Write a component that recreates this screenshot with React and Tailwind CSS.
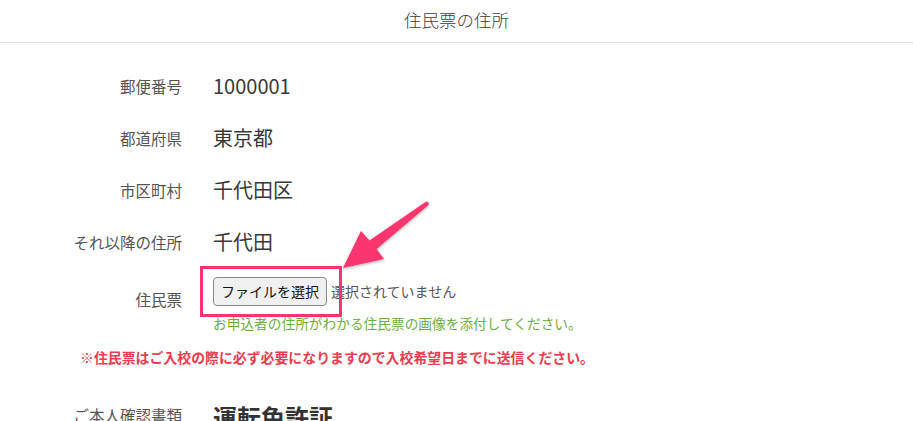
import React from "react";

const font = { fontFamily: '"Noto Sans CJK JP", "Noto Sans", sans-serif' };

function Row({ label, children }) {
  return (
    <div className="grid h-[52px] grid-cols-[182px_1fr] items-center gap-x-[31px]">
      <div className="text-right text-[15.5px] leading-6 text-[#555]">{label}</div>
      <div className="text-[20px] leading-7 text-[#383838]">{children}</div>
    </div>
  );
}

export default function App() {
  return (
    <div className="relative h-[421px] w-[913px] overflow-hidden bg-white" style={font}>
      <div className="flex h-[43px] items-center justify-center border-b border-[#e6e6e6] pb-[2px]">
        <span className="text-[17.5px] font-light text-[#3c3c3c]">住民票の住所</span>
      </div>

      <div className="pt-[17px]">
        <Row label="郵便番号">1000001</Row>
        <Row label="都道府県">東京都</Row>
        <Row label="市区町村">千代田区</Row>
        <Row label="それ以降の住所">千代田</Row>

        <div className="grid grid-cols-[182px_1fr] gap-x-[31px]">
          <div className="pt-[19px] text-right text-[15.5px] leading-6 text-[#555]">住民票</div>
          <div className="pt-[9px]">
            <div className="relative flex items-center gap-[4px]">
              <button className="flex h-[29px] w-[114px] items-center justify-center rounded-[4px] border border-[#8a8a8a] bg-[#f0f0f0] text-[14px] text-[#111]">
                ファイルを選択
              </button>
              <span className="text-[14px] text-[#555]">選択されていません</span>
              <div className="pointer-events-none absolute left-[-13px] top-[-11px] h-[51px] w-[142px] border-[3px] border-[#fb3470]" />
            </div>
            <div className="mt-[7px] text-[13.7px] leading-5 text-[#6cae3c]">
              お申込者の住所がわかる住民票の画像を添付してください。
            </div>
          </div>
        </div>

        <div className="mt-[14px] pl-[80px] text-[13.9px] font-bold leading-5 text-[#e83d50]">
          ※住民票はご入校の際に必ず必要になりますので入校希望日までに送信ください。
        </div>

        <div className="mt-[22px] grid h-[52px] grid-cols-[182px_1fr] items-center gap-x-[31px]">
          <div className="text-right text-[15.5px] leading-6 text-[#555]">ご本人確認書類</div>
          <div className="pt-[4px] text-[24px] font-bold leading-8 text-[#333]">運転免許証</div>
        </div>
      </div>

      <svg
        className="pointer-events-none absolute left-0 top-0"
        width="913"
        height="421"
        viewBox="0 0 913 421"
      >
        <defs>
          <filter id="sh" x="-20%" y="-20%" width="140%" height="140%">
            <feDropShadow dx="0" dy="1" stdDeviation="1.5" floodColor="#000" floodOpacity="0.35" />
          </filter>
        </defs>
        <path
          d="M343 268 L361 231 L369.5 240.5 L425.5 202 Q429.5 200.5 428.5 205 L376.5 249 L384 259 Z"
          fill="#fb3470"
          filter="url(#sh)"
        />
      </svg>
    </div>
  );
}
